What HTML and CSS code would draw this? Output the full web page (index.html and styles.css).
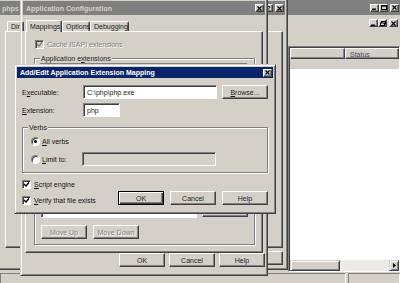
FILE: index.html
```html
<!DOCTYPE html>
<html>
<head>
<meta charset="utf-8">
<link rel="stylesheet" href="styles.css">
</head>
<body>
<div class="win back">
  <div class="title">
    <span class="t"></span>
    <span class="tbtn"><svg width="5" height="5" viewBox="0 0 5 5"><rect x="0" y="3.5" width="4" height="1.5" fill="#000"/></svg></span>
    <span class="tbtn"><svg width="6" height="5" viewBox="0 0 6 5"><rect x="0.5" y="0.5" width="5" height="4" fill="none" stroke="#000"/><rect x="0" y="0" width="6" height="1.6" fill="#000"/></svg></span>
    <span class="tbtn sep"><svg width="5" height="5" viewBox="0 0 5 5"><path d="M0.5 0.5L4.5 4.5M4.5 0.5L0.5 4.5" stroke="#000" stroke-width="1.2"/></svg></span>
  </div>
  <div class="menubar">
    <span class="tbtn"><svg width="5" height="5" viewBox="0 0 5 5"><rect x="0" y="3.5" width="4" height="1.5" fill="#000"/></svg></span>
    <span class="tbtn"><svg width="6" height="5" viewBox="0 0 6 5"><rect x="1.5" y="0.5" width="4" height="2.5" fill="none" stroke="#000"/><rect x="0.5" y="2" width="4" height="2.5" fill="#d4d0c8" stroke="#000"/></svg></span>
    <span class="tbtn sep"><svg width="5" height="5" viewBox="0 0 5 5"><path d="M0.5 0.5L4.5 4.5M4.5 0.5L0.5 4.5" stroke="#000" stroke-width="1.2"/></svg></span>
  </div>
  <div class="toolbar"></div>
  <div class="child">
    <div class="tree"></div>
    <div class="list">
      <div class="lvhead">
        <div class="hcell h1"></div>
        <div class="hcell h2">Status</div>
      </div>
      <div class="lvbody"><div class="selrow"></div></div>
      <div class="hscroll">
        <div class="thumb"></div>
        <div class="track"></div>
        <div class="sbtn"><svg width="3" height="5" viewBox="0 0 3 5"><path d="M0 0L3 2.5L0 5Z" fill="#000"/></svg></div>
      </div>
    </div>
  </div>
  <div class="statusbar"><div class="panel p1"></div><div class="panel p2"></div></div>
</div>

<div class="win php">
  <div class="title php-title">
    <span class="t"><span class="tclip">phpsite</span></span>
    <span class="tbtn q">?</span>
    <span class="tbtn sep"><svg width="5" height="5" viewBox="0 0 5 5"><path d="M0.5 0.5L4.5 4.5M4.5 0.5L0.5 4.5" stroke="#000" stroke-width="1.2"/></svg></span>
  </div>
  <div class="tabs php-tabs"><span class="tab"><span class="tclip2">Directory</span></span></div>
  <div class="pane php-pane"></div>
  <div class="btnrow php-btns"><span class="btn"></span><span class="btn"></span><span class="btn"></span><span class="btn"></span></div>
</div>

<div class="win appconf">
  <div class="title">
    <span class="t">Application Configuration</span>
    <span class="tbtn sep"><svg width="5" height="5" viewBox="0 0 5 5"><path d="M0.5 0.5L4.5 4.5M4.5 0.5L0.5 4.5" stroke="#000" stroke-width="1.2"/></svg></span>
  </div>
  <div class="tabs ac-tabs">
    <span class="tab active">Mappings</span>
    <span class="tab t-opt">Options</span>
    <span class="tab t-dbg">Debugging</span>
  </div>
  <div class="pane ac-pane">
    <div class="chkrow cache"><span class="chk dis"><svg width="7" height="7" viewBox="0 0 7 7"><path d="M1 3L3 5L6 1.5" fill="none" stroke="#808080" stroke-width="1.3"/></svg></span><span class="distext">Cache ISAPI extensions</span></div>
    <div class="group ac-group">
      <span class="glabel">Application e<u>x</u>tensions</span>
      <div class="lbox applist"><div class="lvh"><span class="lc c1"></span><span class="lc c2"></span><span class="lc c3"></span></div></div>
      <div class="rowbtns"><span class="btn"></span><span class="btn"></span><span class="btn"></span></div>
      <div class="wlabel"></div>
      <div class="wrow">
        <div class="lbox wlist"></div>
        <div class="wbtns"><span class="btn"></span><span class="btn"></span><span class="btn"></span></div>
      </div>
      <div class="moverow"><span class="btn distext">Move Up</span><span class="btn distext">Move Down</span></div>
    </div>
  </div>
  <div class="btnrow ac-btns"><span class="btn">OK</span><span class="btn">Cancel</span><span class="btn">Help</span></div>
</div>

<div class="win addedit">
  <div class="title active">
    <span class="t">Add/Edit Application Extension Mapping</span>
    <span class="tbtn"><svg width="5" height="5" viewBox="0 0 5 5"><path d="M0.5 0.5L4.5 4.5M4.5 0.5L0.5 4.5" stroke="#000" stroke-width="1.2"/></svg></span>
  </div>
  <div class="dbody">
    <div class="frow r1">
      <span class="flabel">E<u>x</u>ecutable:</span>
      <span class="tbox exe">C:\php\php.exe</span>
      <span class="btn browse"><u>B</u>rowse...</span>
    </div>
    <div class="frow r2">
      <span class="flabel"><u>E</u>xtension:</span>
      <span class="tbox ext">php</span>
    </div>
    <div class="group verbs">
      <span class="glabel">Verbs</span>
      <div class="vrow v1"><span class="radio on"><span class="dot"></span></span><span><u>A</u>ll verbs</span></div>
      <div class="vrow v2"><span class="rlab"><span class="radio"></span><span><u>L</u>imit to:</span></span><span class="tbox limit"></span></div>
    </div>
    <div class="bottom">
      <div class="checks">
        <div class="chkrow c-se"><span class="chk"><svg width="7" height="7" viewBox="0 0 7 7"><path d="M1 3L3 5L6 1.5" fill="none" stroke="#000" stroke-width="1.3"/></svg></span><span><u>S</u>cript engine</span></div>
        <div class="chkrow c-vf"><span class="chk"><svg width="7" height="7" viewBox="0 0 7 7"><path d="M1 3L3 5L6 1.5" fill="none" stroke="#000" stroke-width="1.3"/></svg></span><span><u>V</u>erify that file exists</span></div>
      </div>
      <div class="dbtns"><span class="btn def">OK</span><span class="btn">Cancel</span><span class="btn">Help</span></div>
    </div>
  </div>
</div>
</body>
</html>
```

FILE: styles.css
```css
* { box-sizing: border-box; margin: 0; padding: 0; }
html, body { width: 400px; height: 283px; overflow: hidden; }
body {
  position: relative;
  background: #d4d0c8;
  font-family: "Liberation Sans", Arial, sans-serif;
  font-size: 7px;
  line-height: 9px;
  color: #111;
}
u { text-decoration: underline; text-underline-offset: 1px; }

/* window frame */
.win {
  position: absolute;
  background: #d4d0c8;
  border: 1px solid;
  border-color: #d4d0c8 #404040 #404040 #d4d0c8;
  box-shadow: inset 1px 1px #fff, inset -1px -1px #808080;
  padding: 2px;
  display: flex;
  flex-direction: column;
}
.title {
  flex: none;
  height: 14px;
  display: flex;
  align-items: center;
  padding: 0 1px 0 3px;
  background: #808080;
  color: #d4d0c8;
  font-weight: bold;
  white-space: nowrap;
}
.title.active { background: #0a246a; color: #fff; }
.title .t { flex: 1; overflow: hidden; }
.tbtn {
  flex: none;
  width: 9px;
  height: 8px;
  background: #d4d0c8;
  border: 1px solid;
  border-color: #fff #404040 #404040 #fff;
  box-shadow: inset -1px -1px #808080;
  display: flex;
  align-items: center;
  justify-content: center;
  color: #000;
  font-size: 6px;
  font-weight: bold;
}
.tbtn.sep { margin-left: 2px; }

.btn {
  flex: none;
  display: flex;
  align-items: center;
  justify-content: center;
  width: 46px;
  height: 14px;
  background: #d4d0c8;
  border: 1px solid;
  border-color: #fff #404040 #404040 #fff;
  box-shadow: inset -1px -1px #808080;
  color: #222;
  white-space: nowrap;
}
.btn.def {
  border-color: #000;
  box-shadow: inset 1px 1px #fff, inset -1px -1px #404040, inset -2px -2px #808080;
}
.distext { color: #808080; text-shadow: 1px 1px 0 #fff; }

.tbox {
  flex: none;
  height: 14px;
  background: #fff;
  border: 1px solid;
  border-color: #808080 #fff #fff #808080;
  box-shadow: inset 1px 1px #404040;
  padding: 2px 0 0 3px;
  color: #222;
  white-space: nowrap;
}

.chk {
  flex: none;
  width: 9px;
  height: 9px;
  background: #fff;
  border: 1px solid;
  border-color: #808080 #fff #fff #808080;
  box-shadow: inset 1px 1px #404040;
  display: flex;
  align-items: center;
  justify-content: center;
  margin-right: 3px;
}
.chk.dis { background: #d4d0c8; }
.chkrow { display: flex; align-items: center; height: 9px; white-space: nowrap; }

.radio {
  flex: none;
  width: 9px;
  height: 9px;
  border-radius: 50%;
  background: #fff;
  border: 1px solid;
  border-color: #808080 #fff #fff #808080;
  box-shadow: inset 1px 1px #404040;
  display: flex;
  align-items: center;
  justify-content: center;
  margin-right: 2px;
}
.radio .dot { width: 3px; height: 3px; border-radius: 50%; background: #000; }

.group {
  flex: none;
  border: 1px solid #808080;
  box-shadow: 1px 1px 0 #fff, inset 1px 1px 0 #fff;
  display: flex;
  flex-direction: column;
}
.glabel {
  display: block;
  width: max-content;
  height: 9px;
  margin: -5px 0 -4px 5px;
  padding: 0 1px;
  background: #d4d0c8;
  color: #222;
}

/* tabs */
.tabs { flex: none; height: 16px; display: flex; align-items: flex-end; position: relative; z-index: 1; }
.tab {
  height: 10px;
  padding: 0 3px;
  border: 1px solid;
  border-bottom: none;
  border-color: #fff #404040 #404040 #fff;
  box-shadow: inset -1px 0 #808080;
  border-radius: 2px 2px 0 0;
  display: flex;
  align-items: center;
  white-space: nowrap;
  color: #222;
}
.tab.active { height: 12px; background: #d4d0c8; margin-bottom: -1px; }
.pane {
  flex: none;
  border: 1px solid;
  border-color: #fff #404040 #404040 #fff;
  box-shadow: inset -1px -1px #808080;
}
.btnrow { flex: none; display: flex; justify-content: flex-end; gap: 4px; }

/* back window */
.back { left: -3px; top: -3px; width: 406px; height: 290px; }
.back .title { height: 15px; }
.menubar { flex: none; height: 16px; display: flex; align-items: center; justify-content: flex-end; padding-right: 2px; }
.toolbar { flex: none; height: 15px; }
.child { flex: 1; display: flex; }
.tree { width: 288px; flex: none; }
.list {
  flex: 1;
  display: flex;
  flex-direction: column;
  border: 1px solid;
  border-color: #808080 #fff #fff #808080;
  box-shadow: inset 1px 1px #404040;
  padding-top: 1px;
  padding-left: 1px;
}
.lvhead { flex: none; height: 11px; display: flex; }
.hcell {
  height: 11px;
  border: 1px solid;
  border-color: #fff #404040 #404040 #fff;
  box-shadow: inset -1px -1px #808080;
  padding: 1px 0 0 4px;
  color: #444;
  white-space: nowrap;
  overflow: hidden;
}
.h1 { width: 55px; }
.h2 { flex: 1; }
.lvbody { flex: 1; background: #fff; }
.selrow { height: 10px; background: #d4d0c8; }
.hscroll { flex: none; height: 11px; display: flex; }
.thumb {
  width: 50px;
  border: 1px solid;
  border-color: #d4d0c8 #404040 #404040 #d4d0c8;
  box-shadow: inset 1px 1px #fff, inset -1px -1px #808080;
  background: #d4d0c8;
}
.track { flex: 1; background: #eceae6; }
.sbtn {
  width: 10px;
  border: 1px solid;
  border-color: #d4d0c8 #404040 #404040 #d4d0c8;
  box-shadow: inset 1px 1px #fff, inset -1px -1px #808080;
  background: #d4d0c8;
  display: flex;
  align-items: center;
  justify-content: center;
}
.statusbar { flex: none; height: 12px; display: flex; gap: 2px; padding-top: 1px; }
.panel { border: 1px solid; border-color: #808080 #fff #fff #808080; height: 11px; }
.p1 { width: 346px; }
.p2 { flex: 1; }

/* phpsite properties */
.php { left: -3px; top: -2px; width: 291px; height: 272px; }
.php-title { padding-left: 2px; }
.tclip { display: inline-block; width: 17px; overflow: hidden; vertical-align: top; }
.tclip2 { display: inline-block; width: 9px; overflow: hidden; vertical-align: top; }
.php-tabs { padding-left: 7px; }
.php-pane { margin: 0 2px 0 5px; height: 217px; }
.php-btns { margin: 3px 2px 0 0; height: 15px; }

/* application configuration */
.appconf { left: 20px; top: -2px; width: 248px; height: 278px; }
.ac-tabs { padding-left: 3px; }
.ac-tabs .active { width: 36px; }
.t-opt { width: 28px; }
.t-dbg { width: 39px; }
.ac-pane { margin: 0 2px; height: 222px; padding: 8px 7px 0 8px; display: flex; flex-direction: column; }
.cache { margin-left: 1px; }
.ac-group { margin-top: 9px; height: 187px; }
.lbox {
  flex: none;
  background: #fff;
  border: 1px solid;
  border-color: #808080 #fff #fff #808080;
  box-shadow: inset 1px 1px #404040;
}
.applist { margin: 4px 0 0 5px; width: 208px; height: 64px; padding: 1px 0 0 1px; }
.lvh { display: flex; height: 9px; }
.lc {
  border: 1px solid;
  border-color: #fff #404040 #404040 #fff;
  background: #d4d0c8;
}
.c1 { width: 52px; }
.c2 { width: 104px; }
.c3 { flex: 1; }
.rowbtns { display: flex; gap: 4px; margin: 4px 0 0 5px; }
.wlabel { margin: 4px 0 0 6px; height: 9px; }
.wrow { display: flex; margin: 2px 0 0 6px; height: 58px; gap: 5px; }
.wlist { width: 156px; height: 58px; }
.wbtns { display: flex; flex-direction: column; justify-content: space-between; height: 57px; }
.moverow { display: flex; gap: 6px; margin: 7px 0 0 6px; }

/* add/edit dialog */
.addedit { left: 14px; top: 64px; width: 262px; height: 150px; z-index: 5; }
.addedit .title { height: 11px; }
.dbody { padding: 0 5px; display: flex; flex-direction: column; }
.frow { display: flex; align-items: center; height: 14px; }
.r1 { margin-top: 7px; }
.r2 { margin-top: 4px; }
.flabel { width: 61px; flex: none; white-space: nowrap; }
.exe { width: 134px; }
.browse { margin-left: 5px; }
.ext { width: 37px; }
.verbs { margin-top: 10px; height: 46px; width: 246px; }
.vrow { display: flex; align-items: center; padding-left: 8px; white-space: nowrap; }
.v1 { margin-top: 9px; height: 9px; }
.v2 { margin-top: 6px; height: 14px; }
.rlab { display: flex; align-items: center; width: 51px; }
.limit { width: 134px; background: #d4d0c8; }
.bottom { display: flex; margin-top: 7px; }
.checks { flex: 1; display: flex; flex-direction: column; }
.c-vf { margin-top: 7px; }
.dbtns { display: flex; gap: 6px; align-self: flex-end; }
```
